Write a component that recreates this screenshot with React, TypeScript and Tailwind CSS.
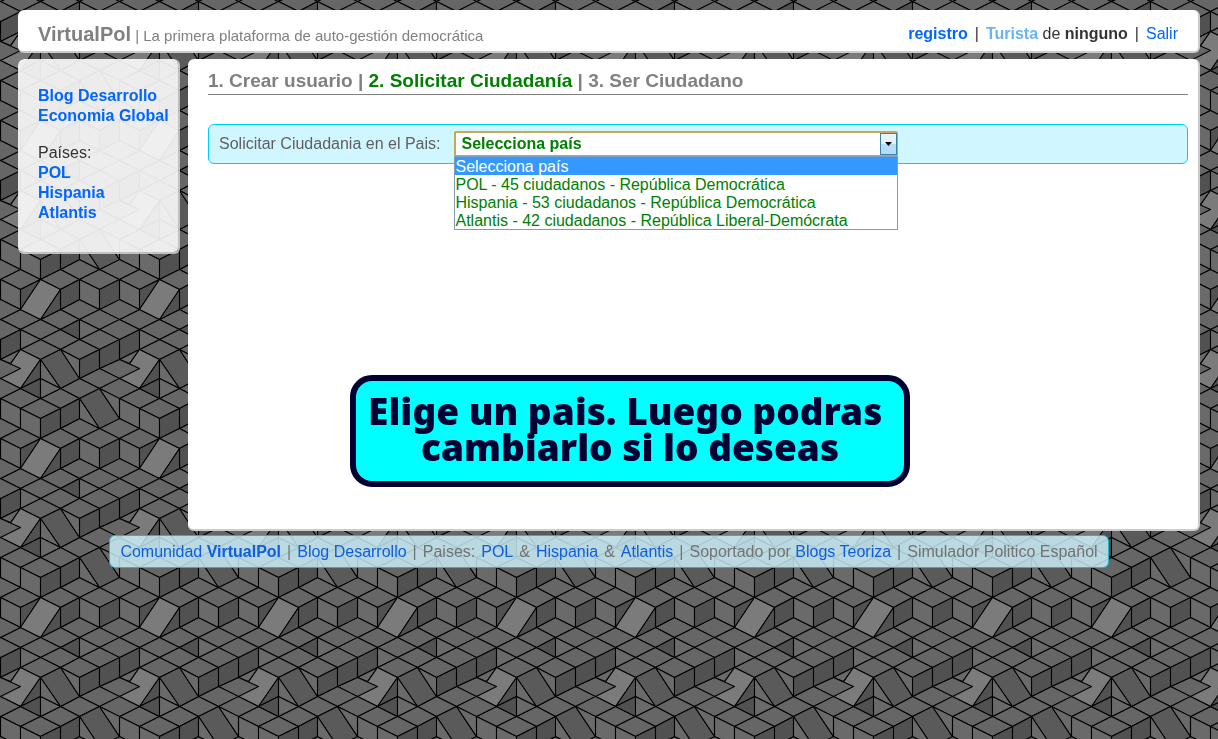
import React from "react";

type Point = [number, number];

const TOP = "#666666";
const LEFT = "#6a6a6a";
const RIGHT = "#515151";
const BRIGHT = "#7b7b7b";
const SHADE = "#5a5a5a";

// The cube pattern lives on a 6 x 16 grid that repeats every 119 x 159 px.
const TILE_W = 119;
const TILE_H = 159;

const topFace = (u: number, v: number): Point[] => [[u - 1, v], [u, v - 1], [u + 1, v], [u, v + 1]];
const leftFace = (u: number, v: number): Point[] => [[u, v], [u + 1, v + 1], [u + 1, v + 3], [u, v + 2]];
const rightFace = (u: number, v: number): Point[] => [[u, v], [u + 1, v - 1], [u + 1, v + 1], [u, v + 2]];

const tops: Point[] = [
  [1, 0], [3, 0], [5, 0], [4, 3], [6, 3], [1, 4], [3, 4], [5, 4], [2, 5], [6, 5], [3, 6], [5, 6],
  [4, 7], [2, 7], [6, 9], [5, 10], [4, 11], [6, 11], [1, 12], [3, 12], [2, 13], [6, 15], [4, 15],
];
const lefts: Point[] = [[0, 0], [4, 0], [0, 12], [1, 13]];
const rights: Point[] = [[3, 1], [5, 1], [0, 6], [4, 8], [5, 7], [2, 14], [3, 13]];

const faces: { fill: string; points: Point[] }[] = [
  ...tops.map(([u, v]) => ({ fill: TOP, points: topFace(u, v) })),
  ...lefts.map(([u, v]) => ({ fill: LEFT, points: leftFace(u, v) })),
  ...rights.map(([u, v]) => ({ fill: RIGHT, points: rightFace(u, v) })),
  { fill: RIGHT, points: [[1, 1], [2, 0], [1, 3]] },
  { fill: BRIGHT, points: [[2, 0], [3, 1], [2, 4], [1, 3]] },
  { fill: RIGHT, points: [[3, 1], [3, 3], [2, 4]] },
  { fill: RIGHT, points: [[3, 5], [4, 4], [4, 6]] },
  { fill: LEFT, points: [[4, 4], [5, 5], [4, 6]] },
  { fill: LEFT, points: [[1, 5], [2, 6], [1, 7]] },
  { fill: LEFT, points: [[0, 8], [1, 7], [0.5, 8.5]] },
  { fill: BRIGHT, points: [[1, 7], [2, 8], [1, 11], [0, 10]] },
  { fill: RIGHT, points: [[2, 8], [2, 10], [1, 11]] },
  { fill: RIGHT, points: [[1, 11], [2, 10], [2, 12]] },
  { fill: SHADE, points: [[2, 8], [3, 7], [4, 10], [3, 11]] },
  { fill: LEFT, points: [[3, 7], [4, 8], [4, 10]] },
  { fill: LEFT, points: [[2, 8], [3, 11], [2, 10]] },
  { fill: LEFT, points: [[2, 10], [3, 11], [2, 12]] },
  { fill: SHADE, points: [[4, 12], [5, 11], [6, 14], [5, 15]] },
  { fill: LEFT, points: [[5, 11], [6, 12], [6, 14]] },
  { fill: LEFT, points: [[4, 12], [5, 15], [4, 14]] },
];

const toPath = (points: Point[]) =>
  "M" +
  points
    .map(([u, v]) => `${Math.round((u * TILE_W) / 6) + 0.5} ${Math.round((v * TILE_H) / 16) + 0.5}`)
    .join("L") +
  "Z";

function CubeBackground() {
  const wraps = [
    [0, 0], [-TILE_W, 0], [0, -TILE_H], [-TILE_W, -TILE_H], [0, TILE_H], [TILE_W, 0],
  ];
  return (
    <svg className="fixed inset-0 -z-10 h-full w-full" aria-hidden="true">
      <defs>
        <pattern
          id="cubes"
          width={TILE_W}
          height={TILE_H}
          patternUnits="userSpaceOnUse"
          patternTransform="translate(0 120)"
        >
          <rect width={TILE_W} height={TILE_H} fill={TOP} />
          {wraps.map(([dx, dy]) => (
            <g key={`${dx},${dy}`} transform={`translate(${dx} ${dy})`}>
              {faces.map((f, i) => (
                <path key={i} d={toPath(f.points)} fill={f.fill} stroke="#000" strokeWidth="1.1" strokeLinejoin="round" />
              ))}
            </g>
          ))}
        </pattern>
      </defs>
      <rect width="100%" height="100%" fill="url(#cubes)" />
    </svg>
  );
}

const options = [
  "Selecciona país",
  "POL - 45 ciudadanos - República Democrática",
  "Hispania - 53 ciudadanos - República Democrática",
  "Atlantis - 42 ciudadanos - República Liberal-Demócrata",
];

function CountrySelect() {
  return (
    <div className="relative w-[444px]">
      <select
        id="pais"
        defaultValue={options[0]}
        className="block h-[26px] w-full appearance-none rounded-[2px] border-2 border-[#c9a655] bg-white pl-[5px] text-base leading-5 font-bold text-[#008000] outline-none"
      >
        {options.map((o) => (
          <option key={o}>{o}</option>
        ))}
      </select>
      <span className="pointer-events-none absolute top-[2px] right-px flex h-[22px] w-[17px] items-center justify-center border border-[#3c7fb1] bg-linear-to-b from-[#e6f4fc] from-50% to-[#b5def5] to-50%">
        <svg width="7" height="4" viewBox="0 0 7 4" aria-hidden="true">
          <path d="M0 0H7L3.5 4Z" fill="#000" />
        </svg>
      </span>
      <ul
        role="listbox"
        aria-label="Países disponibles"
        className="absolute top-[25px] right-0 left-0 border border-[#7f9db9] bg-white text-base leading-5 text-[#008000]"
      >
        {options.map((o, i) => (
          <li
            key={o}
            role="option"
            aria-selected={i === 0}
            className={i === 0 ? "h-[18px] bg-[#3399ff] text-white" : "h-[18px]"}
          >
            {o}
          </li>
        ))}
      </ul>
    </div>
  );
}

const link = "text-[#0066ff]";
const footerLink = "text-[#0d5fe0]";

export default function App() {
  return (
    <div className="relative isolate min-h-screen px-[18px] pt-[10px] font-['Liberation_Sans',Arial,sans-serif] text-base leading-5 text-[#333]">
      <CubeBackground />

      <header className="flex h-[43px] items-center justify-between rounded-md border-r-2 border-b-2 border-[#ccc] bg-white pt-1.5 pr-5 pl-5">
        <h1 className="text-[15px] text-[#808080]">
          <a href="#inicio" className="text-xl font-bold">VirtualPol</a> | La primera plataforma de auto-gestión democrática
        </h1>
        <nav className="flex gap-[7px]">
          <a href="#registro" className={`${link} font-bold`}>registro</a>
          <span>|</span>
          <span>
            <a href="#turista" className="font-bold text-[#66b3ff]">Turista</a> de <b>ninguno</b>
          </span>
          <span>|</span>
          <a href="#salir" className={link}>Salir</a>
        </nav>
      </header>

      <div className="mt-1.5 flex items-start gap-2">
        <aside className="w-[162px] shrink-0 rounded-md border-r-2 border-b-2 border-[#ccc]/90 bg-[#fbfbfb]/91 bg-clip-padding pt-[27px] pb-[29px] pl-5">
          <ul className="font-bold text-[#0066ff]">
            <li><a href="#blog">Blog Desarrollo</a></li>
            <li><a href="#economia">Economia Global</a></li>
          </ul>
          <p className="mt-[17px]">Países:</p>
          <ul className="font-bold text-[#0066ff]">
            <li><a href="#pol">POL</a></li>
            <li><a href="#hispania">Hispania</a></li>
            <li><a href="#atlantis">Atlantis</a></li>
          </ul>
        </aside>

        <main className="grow rounded-md border-r-2 border-b-2 border-[#ccc] bg-white pt-[11px] pr-2.5 pb-[42px] pl-5">
          <h2 className="border-b border-[#808080] pb-[3px] text-[19px] leading-[21px] font-bold text-[#808080]">
            1. Crear usuario | <span className="text-[#008000]">2. Solicitar Ciudadanía</span> | 3. Ser Ciudadano
          </h2>
          <form className="mt-[29px] flex h-10 items-center gap-3.5 rounded-md border border-[#00ccff] bg-[#d0f6ff] px-2.5 text-[#606060]">
            <label htmlFor="pais">Solicitar Ciudadania en el Pais:</label>
            <CountrySelect />
          </form>
          <p className="mt-[211px] mr-auto ml-[142px] w-[560px] rounded-[22px] border-[6px] border-[#000033] bg-[#00ffff] pt-3 pb-4 text-center font-['Noto_Sans',sans-serif] text-[37px] leading-9 font-black whitespace-pre text-[#000033]">
            {"Elige un pais. Luego podras \ncambiarlo si lo deseas"}
          </p>
        </main>
      </div>

      <footer className="mx-auto mt-1 flex h-[33px] w-fit items-center gap-1.5 rounded-md border border-[#00aacc]/80 bg-[#d0f6ff]/80 px-2.5 text-[#737373]">
        <a href="#comunidad" className={footerLink}>Comunidad <b>VirtualPol</b></a>
        <span>|</span>
        <a href="#blog" className={footerLink}>Blog Desarrollo</a>
        <span>|</span>
        <span>Paises:</span>
        <a href="#pol" className={footerLink}>POL</a>
        <span>&amp;</span>
        <a href="#hispania" className={footerLink}>Hispania</a>
        <span>&amp;</span>
        <a href="#atlantis" className={footerLink}>Atlantis</a>
        <span>|</span>
        <span>Soportado por <a href="#teoriza" className={footerLink}>Blogs Teoriza</a></span>
        <span>|</span>
        <span>Simulador Politico Español</span>
      </footer>
    </div>
  );
}
